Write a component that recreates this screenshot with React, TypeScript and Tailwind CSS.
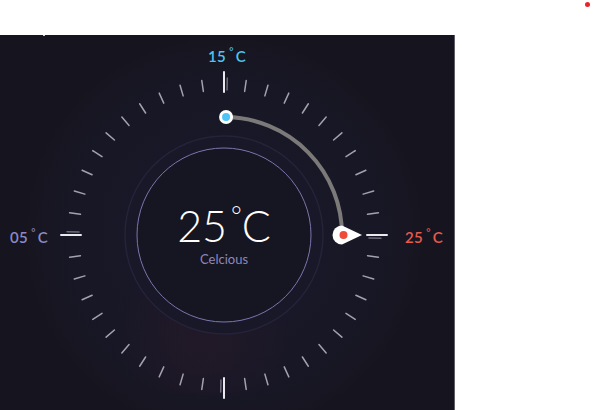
import React from "react";

// Dial geometry (panel coordinates)
const CX = 224;
const CY = 200;
const TICKS = 44;

// Point on a circle, angle in degrees clockwise from top
const polar = (r: number, deg: number) => {
  const a = ((deg - 90) * Math.PI) / 180;
  return { x: CX + r * Math.cos(a), y: CY + r * Math.sin(a) };
};

const Tick = ({ deg, r1, r2, color, width }: { deg: number; r1: number; r2: number; color: string; width: number }) => {
  const a = polar(r1, deg);
  const b = polar(r2, deg);
  return <line x1={a.x} y1={a.y} x2={b.x} y2={b.y} stroke={color} strokeWidth={width} strokeLinecap="round" />;
};

// Degree label like "15 ° C"
const Label = ({ value, className }: { value: string; className: string }) => (
  <div className={`absolute flex items-start text-[15px] font-semibold leading-none tracking-wide ${className}`}>
    <span>{value}</span>
    <span className="ml-[3px] -mt-[3px] text-[10px]">°</span>
    <span className="ml-[2px]">C</span>
  </div>
);

const Dial = () => {
  const ticks = Array.from({ length: TICKS }, (_, i) => i);
  const arcStart = polar(118, 1);
  const arcEnd = polar(118, 90);

  return (
    <div className="relative h-full w-full">
      <svg width="454" height="375" className="absolute left-0 top-0">
        <defs>
          <radialGradient id="halo" cx={CX} cy={CY} r="200" gradientUnits="userSpaceOnUse">
            <stop offset="0" stopColor="#1a1929" />
            <stop offset="0.75" stopColor="#181726" />
            <stop offset="1" stopColor="#16151f" />
          </radialGradient>
          <radialGradient id="warm" cx="205" cy="300" r="90" gradientUnits="userSpaceOnUse">
            <stop offset="0" stopColor="#2a1a28" stopOpacity="0.55" />
            <stop offset="1" stopColor="#2a1a28" stopOpacity="0" />
          </radialGradient>
        </defs>

        {/* Background halo */}
        <circle cx={CX} cy={CY} r="200" fill="url(#halo)" />
        <ellipse cx="205" cy="300" rx="110" ry="60" fill="url(#warm)" />

        {/* Inner rings */}
        <circle cx={CX} cy={CY} r="99" fill="#191828" stroke="#242338" strokeWidth="1.5" />
        <circle cx={CX} cy={CY} r="87" fill="#161522" stroke="#7a76ad" strokeWidth="1" />

        {/* Ticks */}
        {ticks.map((i) => {
          const deg = (i * 360) / TICKS;
          if (i % 11 === 0) {
            return (
              <g key={i}>
                <Tick deg={deg + 1.2} r1={145} r2={157} color="#6d6c78" width={1.5} />
                <Tick deg={deg} r1={143} r2={163} color="#e9e9ee" width={2} />
              </g>
            );
          }
          return <Tick key={i} deg={deg} r1={145} r2={156} color="#a3a2ad" width={1.5} />;
        })}

        {/* Range arc */}
        <path
          d={`M ${arcStart.x} ${arcStart.y} A 118 118 0 0 1 ${arcEnd.x} ${arcEnd.y}`}
          fill="none"
          stroke="#7b7a79"
          strokeWidth="4"
          strokeLinecap="round"
        />

        {/* Min handle */}
        <circle cx={arcStart.x} cy={arcStart.y} r="7" fill="#ffffff" />
        <circle cx={arcStart.x} cy={arcStart.y} r="4" fill="#4fc3f7" />

        {/* Current handle (pin) */}
        <path d={`M ${CX + 118} ${CY - 9.5} A 9.5 9.5 0 1 0 ${CX + 118} ${CY + 9.5} L ${CX + 138} ${CY} Z`} fill="#ffffff" />
        <circle cx={CX + 119.5} cy={CY} r="4" fill="#ee4b3b" />
      </svg>

      {/* Scale labels */}
      <Label value="15" className="left-[208px] top-[14px] text-[#4fc3f0]" />
      <Label value="05" className="left-[10px] top-[195px] text-[#8c8ac4]" />
      <Label value="25" className="left-[405px] top-[195px] text-[#e85a4b]" />

      {/* Centre readout */}
      <div className="absolute left-[137px] top-[113px] flex h-[174px] w-[174px] flex-col items-center justify-center">
        <div className="flex items-start font-light leading-none text-white">
          <span className="text-[43px]">25</span>
          <span className="ml-[4px] mt-[-2px] text-[26px]">°</span>
          <span className="text-[43px]">C</span>
        </div>
        <div className="mt-[6px] text-[13px] leading-none text-[#8c88bb]">Celcious</div>
      </div>
    </div>
  );
};

export default function App() {
  return (
    <div className="relative h-[410px] w-[593px] overflow-hidden bg-white" style={{ fontFamily: "Lato, 'Open Sans', sans-serif" }}>
      {/* Status dot */}
      <div className="absolute right-[3px] top-[2px] h-[5px] w-[5px] rounded-full bg-[#e8262a]" />

      {/* Thermostat panel */}
      <div className="relative mt-[35px] h-[375px] w-[455px] border-r border-[#5f5e68] bg-[#16151f]">
        <div className="absolute left-[43px] top-[-2px] h-[3px] w-[2px] bg-white/80" />
        <Dial />
      </div>
    </div>
  );
}
